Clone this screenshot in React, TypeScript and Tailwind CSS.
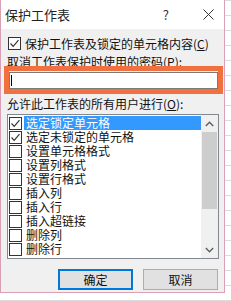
import React from "react"

const font = { fontFamily: '"Noto Sans CJK SC", "Liberation Sans", sans-serif' }

const permissions = [
  { label: "选定锁定单元格", checked: true, selected: true },
  { label: "选定未锁定的单元格", checked: true },
  { label: "设置单元格格式" },
  { label: "设置列格式" },
  { label: "设置行格式" },
  { label: "插入列" },
  { label: "插入行" },
  { label: "插入超链接" },
  { label: "删除列" },
  { label: "删除行" },
]

function CheckBox({ checked }: { checked?: boolean }) {
  return (
    <div className="w-[13px] h-[13px] shrink-0 border border-[#333] bg-white flex items-center justify-center">
      {checked && (
        <svg width="11" height="11" viewBox="0 0 11 11" fill="none">
          <path d="M1.5 5.5 L4.2 8.3 L9.5 2.2" stroke="#333" strokeWidth="1.2" />
        </svg>
      )}
    </div>
  )
}

export default function App() {
  return (
    <div
      className="w-[231px] h-[301px] overflow-hidden bg-white bg-[linear-gradient(#dcdcdc_1px,transparent_1px)] bg-[size:100%_15px] relative"
      style={font}
    >
      <div className="w-[225px] h-[293px] bg-[#f0f0f0] border-l border-r border-b border-[#d9a0b6] flex flex-col text-[12px] leading-[13px] text-[#111]">
        {/* title bar */}
        <div className="h-[29px] shrink-0 bg-white flex items-center pl-[4px] pr-[10px]">
          <span className="text-[13px] leading-[16px] text-[#222]">保护工作表</span>
          <span className="ml-auto mr-[34px] text-[13px] leading-[16px] text-[#333]">?</span>
          <svg width="11" height="11" viewBox="0 0 11 11">
            <path d="M0.5 0.5 L10.5 10.5 M10.5 0.5 L0.5 10.5" stroke="#333" strokeWidth="1" />
          </svg>
        </div>

        <div className="pl-[6px] pr-[5px] flex flex-col">
          <div className="mt-[8px] flex items-center h-[13px]">
            <div className="ml-[1px]">
              <CheckBox checked />
            </div>
            <span className="ml-[4px]">保护工作表及锁定的单元格内容(<span className="underline">C</span>)</span>
          </div>

          <div className="mt-[5px] h-[13px]">取消工作表保护时使用的密码(<span className="underline">P</span>):</div>

          <div className="mt-[4px] ml-[2px] mr-[1px] h-[17px] bg-white border border-[#7a7a7a] flex items-center pl-[1px]">
            <div className="w-[1px] h-[11px] bg-black" />
          </div>

          <div className="mt-[8px] h-[14px]">允许此工作表的所有用户进行(<span className="underline">O</span>):</div>

          <div className="mt-[3px] h-[145px] w-[212px] border border-[#828790] bg-white flex">
            <div className="flex-1 flex flex-col pt-[1px]">
              {permissions.map((p) => (
                <div key={p.label} className="h-[14px] flex items-center">
                  <div className="ml-[1px]">
                    <CheckBox checked={p.checked} />
                  </div>
                  <div
                    className={`ml-[2px] flex-1 h-[14px] leading-[14px] text-[12px] pl-[2px] ${
                      p.selected ? "bg-[#3399ff] text-white" : ""
                    }`}
                  >
                    {p.label}
                  </div>
                </div>
              ))}
            </div>
            <div className="w-[17px] bg-[#f0f0f0] flex flex-col items-center">
              <div className="h-[17px] flex items-center justify-center">
                <svg width="9" height="6" viewBox="0 0 9 6" fill="none">
                  <path d="M0.8 5 L4.5 1.2 L8.2 5" stroke="#606060" strokeWidth="1.4" />
                </svg>
              </div>
              <div className="w-[15px] h-[77px] bg-[#cdcdcd]" />
              <div className="mt-auto h-[17px] flex items-center justify-center">
                <svg width="9" height="6" viewBox="0 0 9 6" fill="none">
                  <path d="M0.8 1 L4.5 4.8 L8.2 1" stroke="#606060" strokeWidth="1.4" />
                </svg>
              </div>
            </div>
          </div>

          <div className="mt-[10px] flex justify-end gap-[10px] pr-[1px]">
            <button className="w-[75px] h-[21px] bg-[#e1e1e1] border-2 border-[#0078d7] text-[12px] leading-[14px] text-[#111]">
              确定
            </button>
            <button className="w-[75px] h-[21px] bg-[#e1e1e1] border border-[#adadad] text-[12px] leading-[14px] text-[#111]">
              取消
            </button>
          </div>
        </div>
      </div>

      {/* orange highlight annotation over the password field */}
      <div className="absolute left-[4px] top-[66px] w-[219px] h-[28px] border-[5px] border-[#f07040]" />
    </div>
  )
}
